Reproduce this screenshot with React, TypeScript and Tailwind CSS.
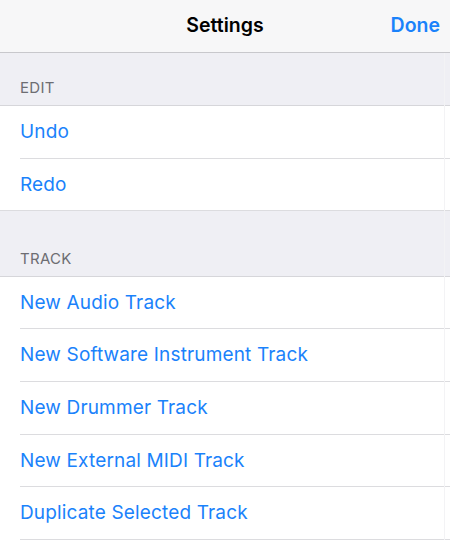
import React from "react";

const font = { fontFamily: "Inter, 'Noto Sans', sans-serif" };

function Row({ label, h, full }: { label: string; h: string; full?: boolean }) {
  return (
    <div className={h + " pl-5 flex flex-col bg-white"}>
      <div className="flex-1 flex items-center pt-px text-[19px] text-[#1a82fb] tracking-[0.15px]">{label}</div>
      <div className={full ? "h-px bg-[#dcdcdf] -ml-5" : "h-px bg-[#dcdcdf]"} />
    </div>
  );
}

function Header({ label, h }: { label: string; h: string }) {
  return (
    <div
      className={
        h +
        " bg-[#efeff4] border-b border-[#d6d6da] flex items-end pl-5 pb-[6px] text-[15px] text-[#6d6d72] tracking-[0.3px]"
      }
    >
      {label}
    </div>
  );
}

export default function App() {
  return (
    <div className="w-[450px] h-[540px] overflow-hidden bg-[#efeff4] relative" style={font}>
      <div className="h-[53px] bg-[#f7f7f8] border-b border-[#c8c8cc] flex items-center justify-center relative">
        <span className="text-[19.5px] font-semibold text-black">Settings</span>
        <span className="absolute right-[10px] text-[19.5px] font-semibold text-[#1a82fb]">Done</span>
      </div>
      <Header label="EDIT" h="h-[53px]" />
      <Row label="Undo" h="h-[53px]" />
      <Row label="Redo" h="h-[52px]" full />
      <Header label="TRACK" h="h-[66px]" />
      <Row label="New Audio Track" h="h-[52px]" />
      <Row label="New Software Instrument Track" h="h-[53px]" />
      <Row label="New Drummer Track" h="h-[53px]" />
      <Row label="New External MIDI Track" h="h-[52px]" />
      <Row label="Duplicate Selected Track" h="h-[53px]" />
      <div className="absolute top-[53px] bottom-0 left-[444px] w-px bg-[#f3f3f5]" />
    </div>
  );
}
